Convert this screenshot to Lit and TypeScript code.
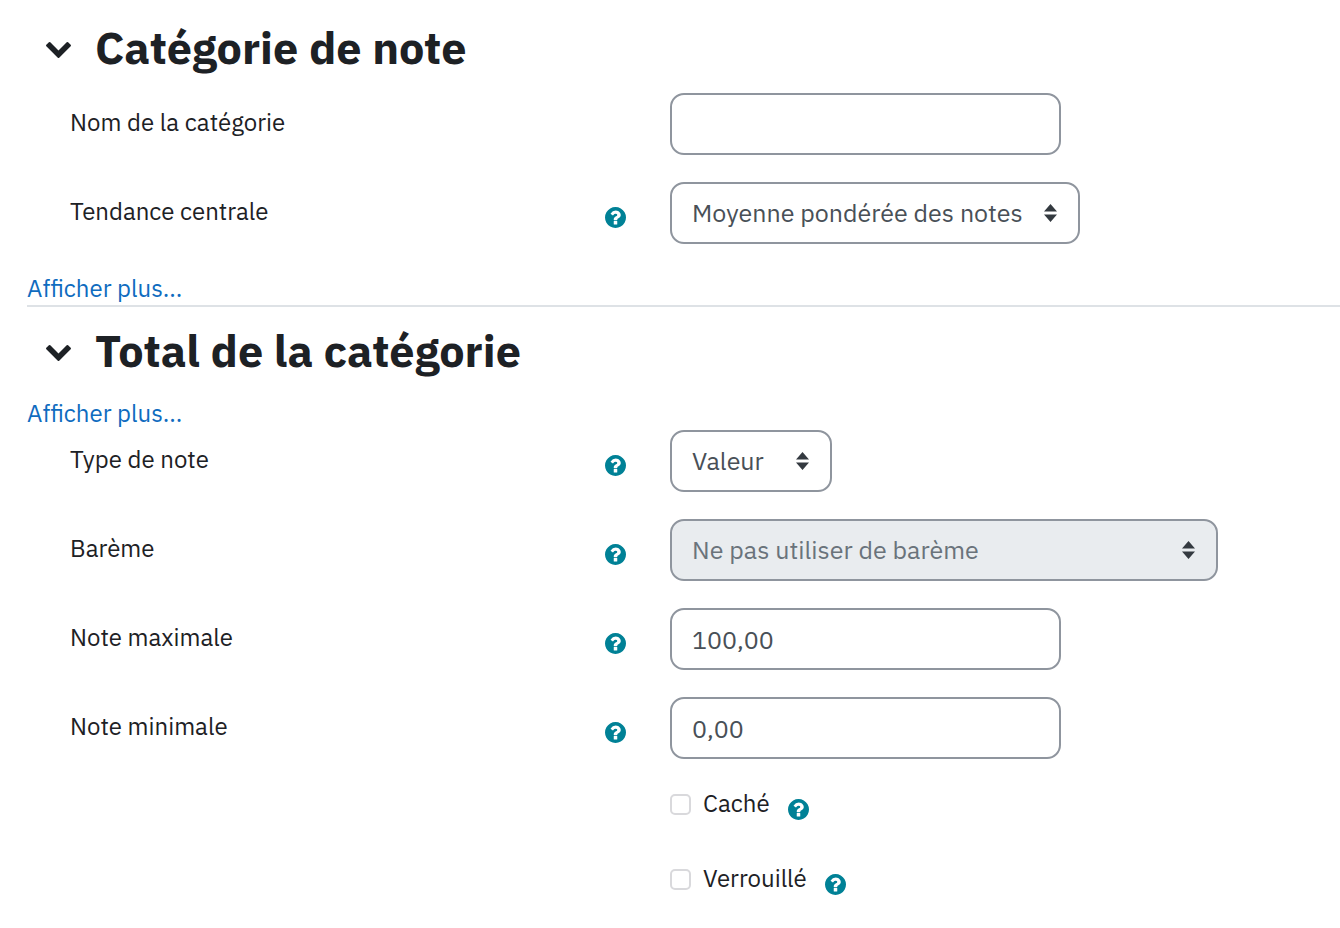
import { LitElement, html, css, svg, nothing } from "lit";
import { customElement, property, state } from "lit/decorators.js";
import { classMap } from "lit/directives/class-map.js";

const FONT = css`"IBM Plex Sans", "Noto Sans", "Open Sans", sans-serif`;

@customElement("help-button")
class HelpButton extends LitElement {
  @property() topic = "";

  static styles = css`
    :host {
      display: inline-flex;
    }
    .help {
      display: flex;
      padding: 0;
      border: 0;
      border-radius: 50%;
      background: none;
      color: #008196;
      cursor: pointer;
    }
    .glyph {
      display: block;
      width: 21px;
      height: 21px;
    }
  `;

  render() {
    return html`<button class="help" type="button" aria-label="Aide sur ${this.topic}">
      <svg class="glyph" viewBox="0 128 1536 1536" aria-hidden="true">
        <path
          fill="currentColor"
          d="M896 1376v-192q0-14-9-23t-23-9h-192q-14 0-23 9t-9 23v192q0 14 9 23t23 9h192q14 0 23-9t9-23zM1152 704q0-88-55.5-163t-138.5-116-170-41q-243 0-371 213-15 24 8 42l132 100q7 6 19 6 16 0 25-12 53-68 86-92 34-24 86-24 48 0 85.5 26t37.5 59q0 38-20 61t-68 45q-63 28-115.5 86.5t-52.5 125.5v36q0 14 9 23t23 9h192q14 0 23-9t9-23q0-19 21.5-49.5t54.5-49.5q32-18 49-28.5t46-35 44.5-48 28-60.5 12.5-81zM1536 896q0 209-103 385.5t-279.5 279.5-385.5 103-385.5-103-279.5-279.5-103-385.5 103-385.5 279.5-279.5 385.5-103 385.5 103 279.5 279.5 103 385.5z"
        />
      </svg>
    </button>`;
  }
}

interface Field {
  id: string;
  label: string;
  kind: "text" | "select";
  value: string;
  size: "short" | "regular" | "medium" | "long";
  help?: boolean;
  disabled?: boolean;
}

const CATEGORY_FIELDS: Field[] = [
  { id: "fullname", label: "Nom de la catégorie", kind: "text", value: "", size: "regular" },
  { id: "aggregation", label: "Tendance centrale", kind: "select", value: "Moyenne pondérée des notes", size: "medium", help: true },
];

const TOTAL_FIELDS: Field[] = [
  { id: "gradetype", label: "Type de note", kind: "select", value: "Valeur", size: "short", help: true },
  { id: "scale", label: "Barème", kind: "select", value: "Ne pas utiliser de barème", size: "long", help: true, disabled: true },
  { id: "grademax", label: "Note maximale", kind: "text", value: "100,00", size: "regular", help: true },
  { id: "grademin", label: "Note minimale", kind: "text", value: "0,00", size: "regular", help: true },
];

const FLAGS = [
  { id: "hidden", label: "Caché" },
  { id: "locked", label: "Verrouillé" },
];

@customElement("app-root")
class AppRoot extends LitElement {
  @state() private closed: Record<string, boolean> = {};

  static styles = css`
    :host {
      display: block;
      padding: 11px 0 0 27px;
      background: #fff;
      color: #1d2125;
      font-family: ${FONT};
      font-size: 24px;
      line-height: 34px;
    }
    .section + .section {
      border-top: 2px solid #dee2e6;
      padding-top: 7px;
    }
    .header {
      display: flex;
      align-items: center;
      gap: 24px;
      height: 72px;
      padding-left: 19px;
    }
    .toggle {
      display: flex;
      padding: 6px 0 0;
      border: 0;
      background: none;
      color: inherit;
      cursor: pointer;
    }
    .chevron {
      display: block;
      width: 25px;
      height: 16px;
    }
    .folded .chevron {
      transform: rotate(-90deg);
    }
    .title {
      margin: 0;
      font-size: 45px;
      font-weight: 700;
      line-height: 56px;
    }
    .body {
      padding-top: 10px;
    }
    .more {
      display: block;
      width: fit-content;
      color: #0f6cbf;
      text-decoration: none;
    }
    .row {
      display: grid;
      grid-template-columns: minmax(0, 60fr) minmax(0, 67fr);
      margin: 0 0 27px 43px;
    }
    .caption {
      display: flex;
      justify-content: space-between;
      align-items: flex-start;
      padding: 12px 44px 0 0;
    }
    .caption help-button {
      padding-top: 13px;
    }
    .control {
      position: relative;
      max-width: 100%;
    }
    .short {
      width: 162px;
    }
    .regular {
      width: 391px;
    }
    .medium {
      width: 410px;
    }
    .long {
      width: 548px;
    }
    .input {
      display: block;
      box-sizing: border-box;
      width: 100%;
      height: 62px;
      margin: 0;
      padding: 0 20px;
      border: 2px solid #8f959e;
      border-radius: 14px;
      background: #fff;
      color: #495057;
      font: inherit;
      font-size: 25px;
      appearance: none;
    }
    .input:disabled {
      background: #e9ecef;
      color: #6a737b;
      opacity: 1;
    }
    .arrows {
      position: absolute;
      top: 22px;
      right: 23px;
      width: 13px;
      height: 18px;
      pointer-events: none;
    }
    .flag-row {
      margin-bottom: 41px;
    }
    .flag {
      display: flex;
      align-items: center;
      grid-column: 2;
      height: 34px;
    }
    .flag help-button {
      padding: 12px 0 0 18px;
    }
    .check {
      box-sizing: border-box;
      width: 21px;
      height: 21px;
      margin: 3px 12px 0 0;
      border: 2px solid #d9d9dc;
      border-radius: 5px;
      background: #fff;
      appearance: none;
    }
    .check:checked {
      border-color: #0f6cbf;
      background: #0f6cbf;
    }
  `;

  private fold(key: string) {
    this.closed = { ...this.closed, [key]: !this.closed[key] };
  }

  private header(key: string, title: string) {
    const folded = !!this.closed[key];
    return html`<div class=${classMap({ header: true, folded })}>
      <button
        class="toggle"
        type="button"
        aria-label=${title}
        aria-expanded=${folded ? "false" : "true"}
        @click=${() => this.fold(key)}
      >
        <svg class="chevron" viewBox="90 533 1612 1035" aria-hidden="true">
          <path
            fill="currentColor"
            d="M1683 808l-742 741q-19 19-45 19t-45-19l-742-741q-19-19-19-45.5t19-45.5l166-165q19-19 45-19t45 19l531 531 531-531q19-19 45-19t45 19l166 165q19 19 19 45.5t-19 45.5z"
          />
        </svg>
      </button>
      <h3 class="title">${title}</h3>
    </div>`;
  }

  private control(f: Field) {
    if (f.kind === "text") {
      return html`<input class="input" id=${f.id} type="text" .value=${f.value} />`;
    }
    return html`<select class="input" id=${f.id} ?disabled=${!!f.disabled}>
        <option selected>${f.value}</option>
      </select>
      <svg class="arrows" viewBox="0 0 13 18" aria-hidden="true">
        ${svg`<path fill="#343a40" d="M6.5 0 13 7.5H0zM6.5 18 0 10.5h13z" />`}
      </svg>`;
  }

  private row(f: Field) {
    return html`<div class="row">
      <div class="caption">
        <label for=${f.id}>${f.label}</label>
        ${f.help ? html`<help-button topic=${f.label}></help-button>` : nothing}
      </div>
      <div class="control ${f.size}">${this.control(f)}</div>
    </div>`;
  }

  private more() {
    return html`<a class="more" href="#">Afficher plus...</a>`;
  }

  render() {
    return html`<form>
      <section class="section">
        ${this.header("category", "Catégorie de note")}
        <div class="body" ?hidden=${!!this.closed.category}>
          ${CATEGORY_FIELDS.map((f) => this.row(f))} ${this.more()}
        </div>
      </section>
      <section class="section">
        ${this.header("total", "Total de la catégorie")}
        <div class="body" ?hidden=${!!this.closed.total}>
          ${this.more()} ${TOTAL_FIELDS.map((f) => this.row(f))}
          ${FLAGS.map(
            (flag) => html`<div class="row flag-row">
              <div class="flag">
                <input class="check" id=${flag.id} type="checkbox" />
                <label for=${flag.id}>${flag.label}</label>
                <help-button topic=${flag.label}></help-button>
              </div>
            </div>`
          )}
        </div>
      </section>
    </form>`;
  }
}
